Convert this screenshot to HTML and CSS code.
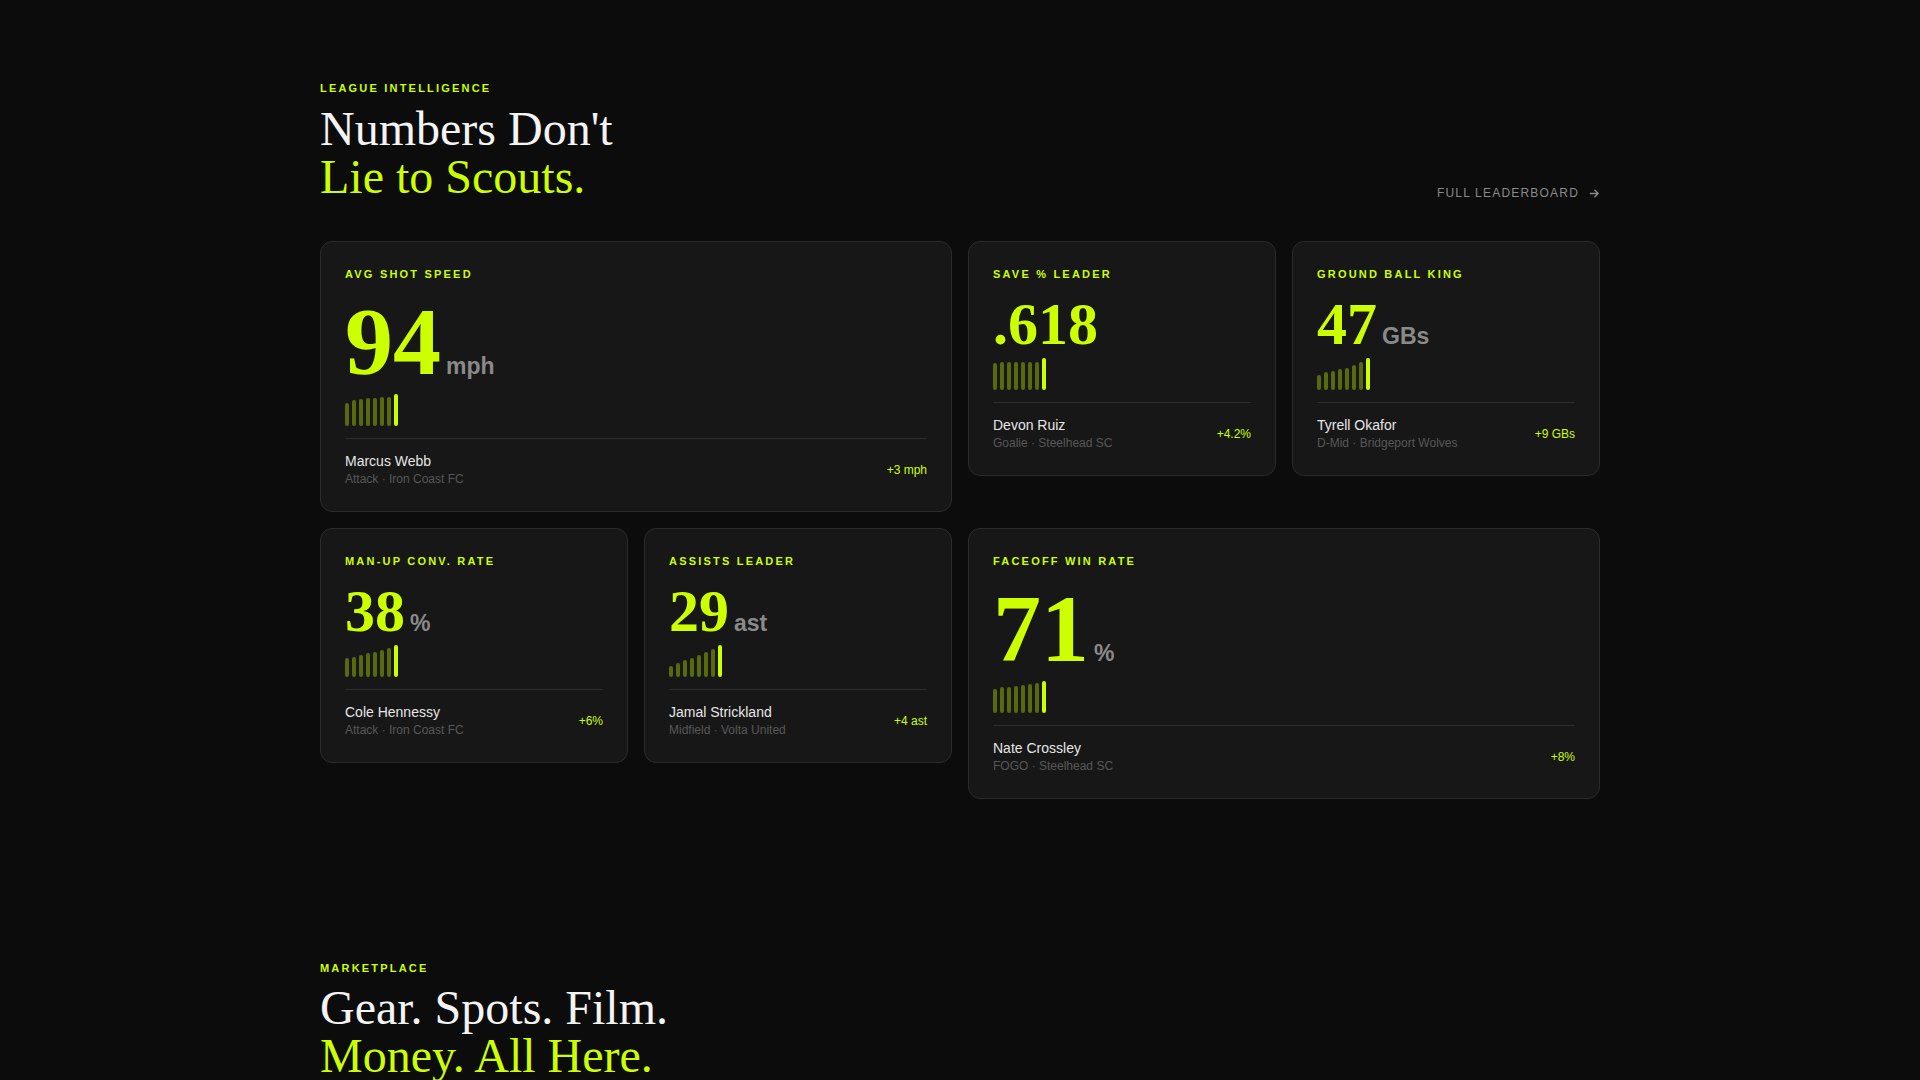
FILE: index.html
```html
<!DOCTYPE html>
<html lang="en">
<head>
<meta charset="utf-8">
<title>League Intelligence</title>
<link rel="stylesheet" href="styles.css">
</head>
<body>
<section class="section">
  <div class="container">
    <div class="section-head">
      <div>
        <div class="eyebrow">League Intelligence</div>
        <h2 class="title">Numbers Don't<br><span class="accent">Lie to Scouts.</span></h2>
      </div>
      <a class="link" href="#">Full Leaderboard
        <svg class="arrow" viewBox="0 0 12 12" width="11" height="11"><path d="M1.5 6h8.5M6.5 2.5L10 6l-3.5 3.5" fill="none" stroke="currentColor" stroke-width="1.6" stroke-linecap="round" stroke-linejoin="round"/></svg>
      </a>
    </div>

    <div class="grid">
      <div class="card wide">
        <div class="label">Avg Shot Speed</div>
        <div class="stat"><span class="num big">94</span><span class="unit">mph</span></div>
        <div class="bars">
          <i style="height:72%"></i><i style="height:80%"></i><i style="height:84%"></i><i style="height:86%"></i><i style="height:88%"></i><i style="height:90%"></i><i style="height:92%"></i><i class="on" style="height:100%"></i>
        </div>
        <div class="foot">
          <div><div class="name">Marcus Webb</div><div class="meta">Attack · Iron Coast FC</div></div>
          <div class="delta">+3 mph</div>
        </div>
      </div>

      <div class="card">
        <div class="label">Save % Leader</div>
        <div class="stat"><span class="num">.618</span></div>
        <div class="bars">
          <i style="height:84%"></i><i style="height:86%"></i><i style="height:86%"></i><i style="height:87%"></i><i style="height:87%"></i><i style="height:88%"></i><i style="height:88%"></i><i class="on" style="height:100%"></i>
        </div>
        <div class="foot">
          <div><div class="name">Devon Ruiz</div><div class="meta">Goalie · Steelhead SC</div></div>
          <div class="delta">+4.2%</div>
        </div>
      </div>

      <div class="card">
        <div class="label">Ground Ball King</div>
        <div class="stat"><span class="num">47</span><span class="unit">GBs</span></div>
        <div class="bars">
          <i style="height:48%"></i><i style="height:56%"></i><i style="height:60%"></i><i style="height:66%"></i><i style="height:70%"></i><i style="height:78%"></i><i style="height:86%"></i><i class="on" style="height:100%"></i>
        </div>
        <div class="foot">
          <div><div class="name">Tyrell Okafor</div><div class="meta">D-Mid · Bridgeport Wolves</div></div>
          <div class="delta">+9 GBs</div>
        </div>
      </div>

      <div class="card">
        <div class="label">Man-Up Conv. Rate</div>
        <div class="stat"><span class="num">38</span><span class="unit">%</span></div>
        <div class="bars">
          <i style="height:58%"></i><i style="height:64%"></i><i style="height:70%"></i><i style="height:74%"></i><i style="height:78%"></i><i style="height:84%"></i><i style="height:90%"></i><i class="on" style="height:100%"></i>
        </div>
        <div class="foot">
          <div><div class="name">Cole Hennessy</div><div class="meta">Attack · Iron Coast FC</div></div>
          <div class="delta">+6%</div>
        </div>
      </div>

      <div class="card">
        <div class="label">Assists Leader</div>
        <div class="stat"><span class="num">29</span><span class="unit">ast</span></div>
        <div class="bars">
          <i style="height:34%"></i><i style="height:44%"></i><i style="height:52%"></i><i style="height:60%"></i><i style="height:70%"></i><i style="height:78%"></i><i style="height:86%"></i><i class="on" style="height:100%"></i>
        </div>
        <div class="foot">
          <div><div class="name">Jamal Strickland</div><div class="meta">Midfield · Volta United</div></div>
          <div class="delta">+4 ast</div>
        </div>
      </div>

      <div class="card wide">
        <div class="label">Faceoff Win Rate</div>
        <div class="stat"><span class="num big">71</span><span class="unit">%</span></div>
        <div class="bars">
          <i style="height:76%"></i><i style="height:80%"></i><i style="height:82%"></i><i style="height:85%"></i><i style="height:87%"></i><i style="height:90%"></i><i style="height:94%"></i><i class="on" style="height:100%"></i>
        </div>
        <div class="foot">
          <div><div class="name">Nate Crossley</div><div class="meta">FOGO · Steelhead SC</div></div>
          <div class="delta">+8%</div>
        </div>
      </div>
    </div>
  </div>
</section>

<section class="section">
  <div class="container">
    <div class="eyebrow">Marketplace</div>
    <h2 class="title">Gear. Spots. Film.<br><span class="accent">Money. All Here.</span></h2>
  </div>
</section>
</body>
</html>
```

FILE: styles.css
```css
* { box-sizing: border-box; }
html, body { margin: 0; padding: 0; }
body {
  background: #0c0c0c;
  color: #f2f2f2;
  font-family: "Liberation Sans", Arial, sans-serif;
}
.section { padding: 80px 0; }
.section + .section { padding-top: 81px; }
.section + .section .eyebrow { margin-bottom: 8px; }
.container { width: 1280px; margin: 0 auto; }

.section-head {
  display: flex;
  justify-content: space-between;
  align-items: flex-end;
  margin-bottom: 40px;
}
.eyebrow {
  font-size: 11px;
  line-height: 16px;
  font-weight: 700;
  letter-spacing: 0.2em;
  text-transform: uppercase;
  color: #ccff00;
  margin-bottom: 9px;
}
.title {
  margin: 0;
  font-family: "Liberation Serif", "Times New Roman", serif;
  font-weight: 400;
  font-size: 48px;
  line-height: 48px;
  color: #f4f4f4;
}
.accent { color: #ccff00; }

.link {
  display: flex;
  align-items: center;
  gap: 10px;
  font-size: 12px;
  line-height: 16px;
  letter-spacing: 0.1em;
  text-transform: uppercase;
  color: #8a8a8a;
  text-decoration: none;
}
.arrow { display: block; }

.grid {
  display: grid;
  grid-template-columns: repeat(4, 1fr);
  gap: 16px;
  align-items: start;
}
.card {
  background: #171717;
  border: 1px solid #2b2b2b;
  border-radius: 12px;
  padding: 24px 24px 24px;
}
.card.wide { grid-column: span 2; }

.label {
  font-size: 11px;
  line-height: 16px;
  font-weight: 700;
  letter-spacing: 0.2em;
  text-transform: uppercase;
  color: #ccff00;
  margin-bottom: 12px;
}
.stat {
  display: flex;
  align-items: baseline;
  gap: 5px;
}
.num {
  font-family: "Liberation Serif", "Times New Roman", serif;
  font-weight: 700;
  font-size: 60px;
  line-height: 60px;
  color: #ccff00;
}
.num.big {
  font-size: 96px;
  line-height: 96px;
}
.unit {
  font-size: 23px;
  font-weight: 700;
  color: #8a8a8a;
}
.bars {
  display: flex;
  align-items: flex-end;
  gap: 3px;
  height: 32px;
  margin: 4px 0 12px;
}
.bars i {
  display: block;
  width: 4px;
  border-radius: 2px;
  background: rgba(204, 255, 0, 0.36);
}
.bars i.on { background: #ccff00; }

.foot {
  display: flex;
  justify-content: space-between;
  align-items: center;
  border-top: 1px solid #2e2e2e;
  padding-top: 13px;
}
.name {
  font-size: 14px;
  line-height: 18px;
  color: #e6e6e6;
}
.meta {
  font-size: 12px;
  line-height: 16px;
  color: #575757;
  margin-top: 1px;
}
.delta {
  font-size: 12px;
  color: #ccff00;
}
```
